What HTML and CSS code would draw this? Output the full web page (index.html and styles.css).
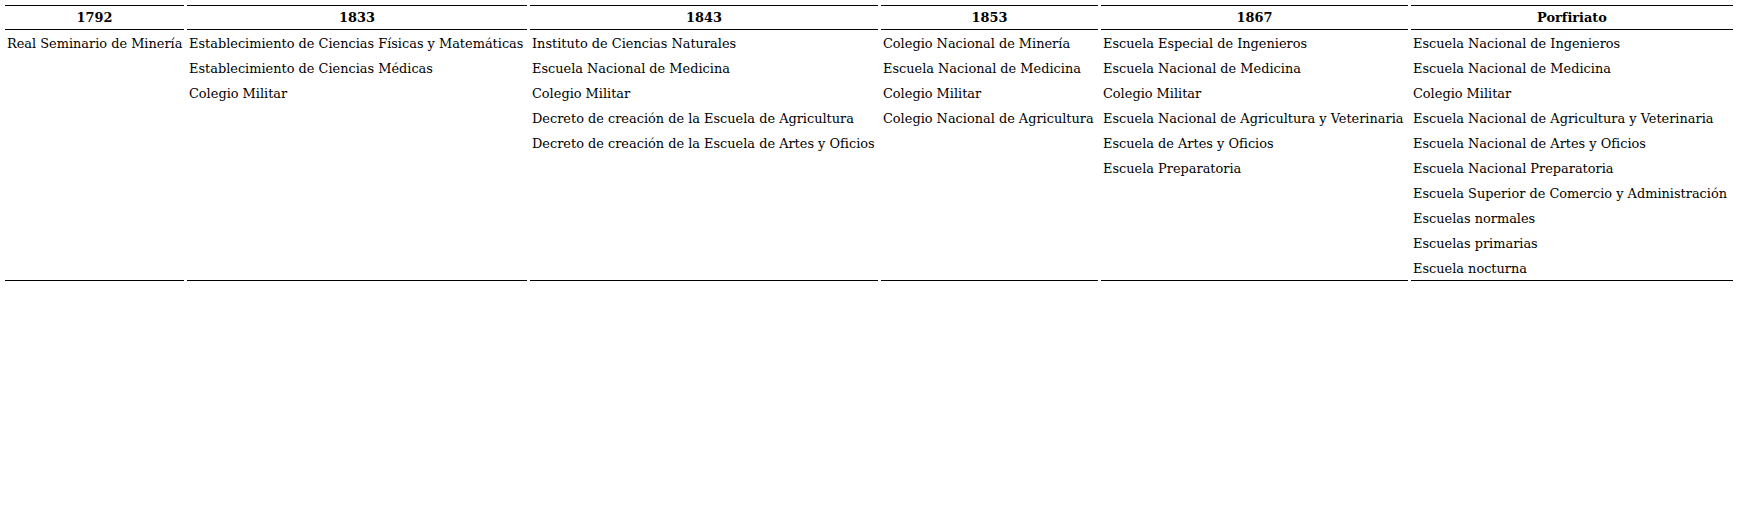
FILE: index.html
```html
<!DOCTYPE html>
<html lang="es">
<head>
<meta charset="utf-8">
<title>Instituciones educativas</title>
<link rel="stylesheet" href="styles.css">
</head>
<body>
<table class="timeline">
  <colgroup>
    <col class="c1"><col class="c2"><col class="c3"><col class="c4"><col class="c5"><col class="c6">
  </colgroup>
  <thead>
    <tr>
      <th>1792</th><th>1833</th><th>1843</th><th>1853</th><th>1867</th><th>Porfiriato</th>
    </tr>
  </thead>
  <tbody>
    <tr>
      <td>
        <div class="item">Real Seminario de Minería</div>
      </td>
      <td>
        <div class="item">Establecimiento de Ciencias Físicas y Matemáticas</div>
        <div class="item">Establecimiento de Ciencias Médicas</div>
        <div class="item">Colegio Militar</div>
      </td>
      <td>
        <div class="item">Instituto de Ciencias Naturales</div>
        <div class="item">Escuela Nacional de Medicina</div>
        <div class="item">Colegio Militar</div>
        <div class="item">Decreto de creación de la Escuela de Agricultura</div>
        <div class="item">Decreto de creación de la Escuela de Artes y Oficios</div>
      </td>
      <td>
        <div class="item">Colegio Nacional de Minería</div>
        <div class="item">Escuela Nacional de Medicina</div>
        <div class="item">Colegio Militar</div>
        <div class="item">Colegio Nacional de Agricultura</div>
      </td>
      <td>
        <div class="item">Escuela Especial de Ingenieros</div>
        <div class="item">Escuela Nacional de Medicina</div>
        <div class="item">Colegio Militar</div>
        <div class="item">Escuela Nacional de Agricultura y Veterinaria</div>
        <div class="item">Escuela de Artes y Oficios</div>
        <div class="item">Escuela Preparatoria</div>
      </td>
      <td>
        <div class="item">Escuela Nacional de Ingenieros</div>
        <div class="item">Escuela Nacional de Medicina</div>
        <div class="item">Colegio Militar</div>
        <div class="item">Escuela Nacional de Agricultura y Veterinaria</div>
        <div class="item">Escuela Nacional de Artes y Oficios</div>
        <div class="item">Escuela Nacional Preparatoria</div>
        <div class="item">Escuela Superior de Comercio y Administración</div>
        <div class="item">Escuelas normales</div>
        <div class="item">Escuelas primarias</div>
        <div class="item">Escuela nocturna</div>
      </td>
    </tr>
  </tbody>
</table>
</body>
</html>
```

FILE: styles.css
```css
html, body {
  margin: 0;
  padding: 0;
  background: #ffffff;
}

body {
  font-family: "DejaVu Serif", "Liberation Serif", serif;
  font-size: 12.9px;
  color: #000000;
}

.timeline {
  margin: 2px 0 0 2px;
  width: 1734px;
  table-layout: fixed;
  border-collapse: separate;
  border-spacing: 3px;
}

.c1 { width: 179px; }
.c2 { width: 340px; }
.c3 { width: 348px; }
.c4 { width: 217px; }
.c5 { width: 307px; }
.c6 { width: 322px; }

.timeline th {
  height: 22px;
  padding: 1px 0 0 0;
  border-top: 1px solid #000;
  border-bottom: 1px solid #000;
  font-weight: bold;
  text-align: center;
  vertical-align: middle;
  line-height: 16px;
}

.timeline td {
  padding: 2px 0 2px 2px;
  border-bottom: 1px solid #000;
  vertical-align: top;
  white-space: nowrap;
  overflow: hidden;
}

.item {
  line-height: 18px;
}

.item + .item {
  margin-top: 7px;
}
```
